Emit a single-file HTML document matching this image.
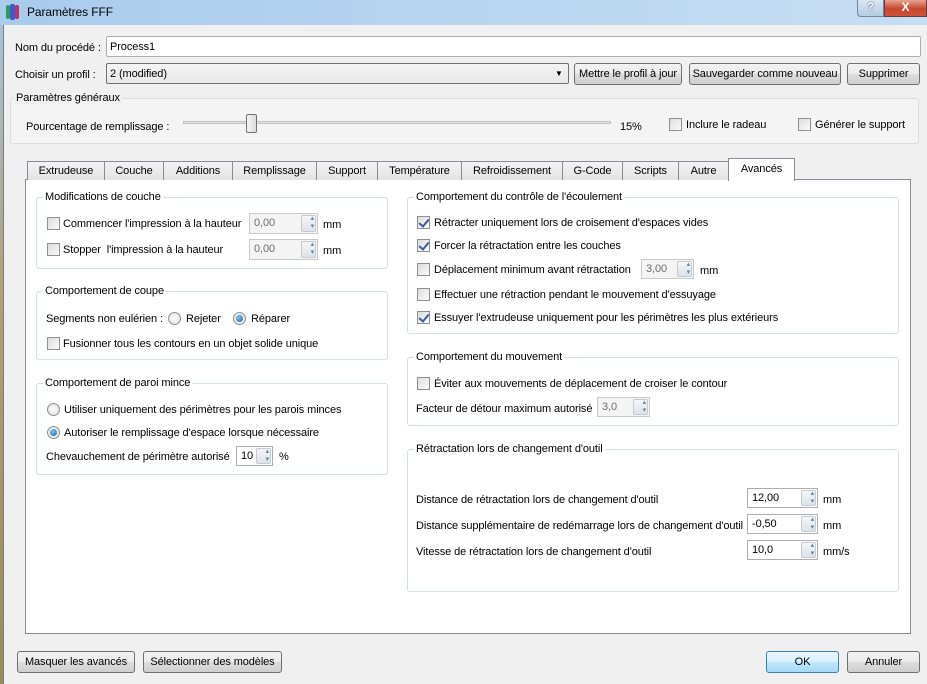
<!DOCTYPE html>
<html><head><meta charset="utf-8"><style>
*{box-sizing:border-box;margin:0;padding:0}
body{width:927px;height:684px;overflow:hidden;position:relative;background:#f0f0f0;font-family:"Liberation Sans",sans-serif;font-size:11px;letter-spacing:-0.1px;color:#000}
.a{position:absolute;white-space:nowrap}
.t{position:absolute;white-space:nowrap;line-height:14px;margin-top:1px}
#title{left:0;top:0;width:927px;height:25px;background:linear-gradient(90deg,#a9cbec,#b8d5f0 50%,#c6def3)}
#lf{left:0;top:25px;width:4px;height:659px;background:linear-gradient(#a9c3d8,#b5a070 40%,#9c8a55)}
.in{position:absolute;background:#fff;border:1px solid #abadb3;border-radius:2px}
.btn{position:absolute;border:1px solid #707070;border-radius:3px;background:linear-gradient(#f2f2f2,#ebebeb 50%,#dddddd 51%,#cfcfcf);text-align:center;line-height:20px;white-space:nowrap}
.grp{position:absolute;border:1px solid #d5dfe5;border-radius:3px}
.gt{position:absolute;top:-8px;left:6px;background:#fff;padding:0 2px;line-height:14px;white-space:nowrap}
.cb{position:absolute;width:13px;height:13px;border:1px solid #8e8f8f;background:linear-gradient(135deg,#dcdcdc,#fbfbfb)}
.cb.c::after{content:"";position:absolute;left:3px;top:0px;width:4px;height:8px;border:solid #3c5a9a;border-width:0 2px 2px 0;transform:rotate(40deg)}
.rd{position:absolute;width:13px;height:13px;border:1px solid #8e8f8f;border-radius:50%;background:radial-gradient(#fff,#dcdcdc)}
.rd.c::after{content:"";position:absolute;left:2px;top:2px;width:7px;height:7px;border-radius:50%;background:radial-gradient(circle at 40% 35%,#7fc4f0,#1a5a9a)}
.sp{position:absolute;background:#fff;border:1px solid #abadb3;line-height:18px;padding-left:4px}
.sp.d{background:#f4f4f4;color:#6d6d6d;border-color:#c9c9c9}
.sp::after{content:"";position:absolute;right:1px;top:1px;width:13px;bottom:1px;border:1px solid #c5c9d0;border-radius:2px;background:linear-gradient(#f4f6f8,#dde3ea)}
.sp::before{content:"▴\A▾";white-space:pre;position:absolute;right:3px;top:1px;font-size:7px;line-height:8px;color:#6080a8;z-index:1}
.tab{position:absolute;top:161px;height:19px;border:1px solid #898c95;border-bottom:none;background:linear-gradient(#f3f3f3,#e3e3e3);text-align:center;line-height:18px}
</style></head><body>
<div class="a" id="title"></div>
<div class="a" style="left:6px;top:5px;width:4px;height:14px;background:#2a9d5a;border-radius:2px"></div>
<div class="a" style="left:10px;top:4px;width:5px;height:16px;background:#3b5bd0;border-radius:2px"></div>
<div class="a" style="left:15px;top:5px;width:4px;height:14px;background:#c0306a;border-radius:2px"></div>
<div class="t" style="left:27px;top:4px;font-size:12px">Paramètres FFF</div>
<div class="a" style="left:857px;top:0;width:27px;height:17px;border:1px solid #6d87a4;border-top:none;border-radius:0 0 0 4px;background:linear-gradient(#dbe7f3,#b5cbe1);text-align:center;font-size:11px;color:#fff;line-height:15px;font-weight:bold;text-shadow:0 0 2px #345">?</div>
<div class="a" style="left:884px;top:0;width:43px;height:17px;border:1px solid #6d3a3a;border-top:none;background:linear-gradient(#e8a393,#c7472f 55%,#d0513a);text-align:center;color:#fff;font-weight:bold;font-size:12px;line-height:15px">X</div>
<div class="a" id="lf"></div>
<div class="a" style="left:3px;top:25px;width:1px;height:659px;background:#6f7f8f"></div>

<div class="t" style="left:15px;top:40px">Nom du procédé :</div>
<div class="in" style="left:106px;top:36px;width:815px;height:21px"><span class="t" style="left:3px;top:2px">Process1</span></div>
<div class="t" style="left:15px;top:67px">Choisir un profil :</div>
<div class="in" style="left:106px;top:63px;width:463px;height:21px;border-color:#707070;background:linear-gradient(#f4f4f4,#e8e8e8)"><span class="t" style="left:3px;top:2px">2 (modified)</span><span class="t" style="left:448px;top:2px;font-size:8px">▼</span></div>
<div class="btn" style="left:574px;top:63px;width:108px;height:22px">Mettre le profil à jour</div>
<div class="btn" style="left:689px;top:63px;width:152px;height:22px">Sauvegarder comme nouveau</div>
<div class="btn" style="left:847px;top:63px;width:73px;height:22px">Supprimer</div>

<div class="grp" style="left:10px;top:98px;width:909px;height:46px;background:#f4f4f4;border-color:#dcdcdc"><div class="gt" style="background:#f0f0f0;left:3px">Paramètres généraux</div></div>
<div class="t" style="left:26px;top:119px">Pourcentage de remplissage :</div>
<div class="a" style="left:183px;top:121px;width:428px;height:3px;border:1px solid #c0c0c0;background:#e6e6e6"></div>
<div class="a" style="left:246px;top:114px;width:11px;height:19px;border:1px solid #707070;border-radius:2px;background:linear-gradient(90deg,#f4f4f4,#dcdcdc)"></div>
<div class="t" style="left:620px;top:119px">15%</div>
<div class="cb" style="left:669px;top:118px"></div><div class="t" style="left:686px;top:117px">Inclure le radeau</div>
<div class="cb" style="left:798px;top:118px"></div><div class="t" style="left:815px;top:117px">Générer le support</div>

<div class="a" style="left:25px;top:179px;width:886px;height:455px;background:#fff;border:1px solid #898c95"></div>
<div class="tab" style="left:27px;width:78px">Extrudeuse</div>
<div class="tab" style="left:104px;width:60px">Couche</div>
<div class="tab" style="left:163px;width:70px">Additions</div>
<div class="tab" style="left:232px;width:85px">Remplissage</div>
<div class="tab" style="left:316px;width:62px">Support</div>
<div class="tab" style="left:377px;width:85px">Température</div>
<div class="tab" style="left:461px;width:102px">Refroidissement</div>
<div class="tab" style="left:562px;width:61px">G-Code</div>
<div class="tab" style="left:622px;width:57px">Scripts</div>
<div class="tab" style="left:678px;width:51px">Autre</div>
<div class="tab" style="left:728px;top:158px;width:67px;height:23px;background:#fff;line-height:21px">Avancés</div>

<div class="grp" style="left:36px;top:197px;width:352px;height:72px"><div class="gt">Modifications de couche</div></div>
<div class="cb" style="left:47px;top:217px"></div><div class="t" style="left:63px;top:216px">Commencer l'impression à la hauteur</div>
<div class="sp d" style="left:249px;top:213px;width:69px;height:21px">0,00</div><div class="t" style="left:323px;top:217px">mm</div>
<div class="cb" style="left:47px;top:243px"></div><div class="t" style="left:63px;top:242px">Stopper&nbsp; l'impression à la hauteur</div>
<div class="sp d" style="left:249px;top:239px;width:69px;height:21px">0,00</div><div class="t" style="left:323px;top:243px">mm</div>

<div class="grp" style="left:36px;top:291px;width:352px;height:69px"><div class="gt">Comportement de coupe</div></div>
<div class="t" style="left:46px;top:311px">Segments non eulérien :</div>
<div class="rd" style="left:168px;top:312px"></div><div class="t" style="left:186px;top:311px">Rejeter</div>
<div class="rd c" style="left:233px;top:312px"></div><div class="t" style="left:251px;top:311px">Réparer</div>
<div class="cb" style="left:47px;top:337px"></div><div class="t" style="left:63px;top:336px">Fusionner tous les contours en un objet solide unique</div>

<div class="grp" style="left:36px;top:383px;width:352px;height:92px"><div class="gt">Comportement de paroi mince</div></div>
<div class="rd" style="left:47px;top:403px"></div><div class="t" style="left:64px;top:402px">Utiliser uniquement des périmètres pour les parois minces</div>
<div class="rd c" style="left:47px;top:426px"></div><div class="t" style="left:64px;top:425px">Autoriser le remplissage d'espace lorsque nécessaire</div>
<div class="t" style="left:46px;top:449px">Chevauchement de périmètre autorisé</div>
<div class="sp" style="left:236px;top:446px;width:37px;height:20px">10</div><div class="t" style="left:279px;top:449px">%</div>

<div class="grp" style="left:407px;top:197px;width:492px;height:137px"><div class="gt">Comportement du contrôle de l'écoulement</div></div>
<div class="cb c" style="left:417px;top:216px"></div><div class="t" style="left:434px;top:215px">Rétracter uniquement lors de croisement d'espaces vides</div>
<div class="cb c" style="left:417px;top:239px"></div><div class="t" style="left:434px;top:238px">Forcer la rétractation entre les couches</div>
<div class="cb" style="left:417px;top:263px"></div><div class="t" style="left:434px;top:262px">Déplacement minimum avant rétractation</div>
<div class="sp d" style="left:641px;top:259px;width:53px;height:20px">3,00</div><div class="t" style="left:700px;top:263px">mm</div>
<div class="cb" style="left:417px;top:288px"></div><div class="t" style="left:434px;top:287px">Effectuer une rétraction pendant le mouvement d'essuyage</div>
<div class="cb c" style="left:417px;top:311px"></div><div class="t" style="left:434px;top:310px">Essuyer l'extrudeuse uniquement pour les périmètres les plus extérieurs</div>

<div class="grp" style="left:407px;top:357px;width:492px;height:69px"><div class="gt">Comportement du mouvement</div></div>
<div class="cb" style="left:417px;top:377px"></div><div class="t" style="left:434px;top:376px">Éviter aux mouvements de déplacement de croiser le contour</div>
<div class="t" style="left:416px;top:401px">Facteur de détour maximum autorisé</div>
<div class="sp d" style="left:597px;top:397px;width:53px;height:20px">3,0</div>

<div class="grp" style="left:407px;top:449px;width:492px;height:143px"><div class="gt">Rétractation lors de changement d'outil</div></div>
<div class="t" style="left:416px;top:492px">Distance de rétractation lors de changement d'outil</div>
<div class="sp" style="left:747px;top:488px;width:71px;height:20px">12,00</div><div class="t" style="left:823px;top:492px">mm</div>
<div class="t" style="left:416px;top:518px">Distance supplémentaire de redémarrage lors de changement d'outil</div>
<div class="sp" style="left:747px;top:514px;width:71px;height:20px">-0,50</div><div class="t" style="left:823px;top:518px">mm</div>
<div class="t" style="left:416px;top:544px">Vitesse de rétractation lors de changement d'outil</div>
<div class="sp" style="left:747px;top:540px;width:71px;height:20px">10,0</div><div class="t" style="left:823px;top:544px">mm/s</div>

<div class="btn" style="left:17px;top:651px;width:118px;height:22px">Masquer les avancés</div>
<div class="btn" style="left:143px;top:651px;width:139px;height:22px">Sélectionner des modèles</div>
<div class="btn" style="left:766px;top:651px;width:73px;height:22px;border-color:#3c7fb1;background:linear-gradient(#eaf6fd,#d9f0fc 50%,#bee6fd 51%,#a7d9f5)">OK</div>
<div class="btn" style="left:847px;top:651px;width:73px;height:22px">Annuler</div>
</body></html>
